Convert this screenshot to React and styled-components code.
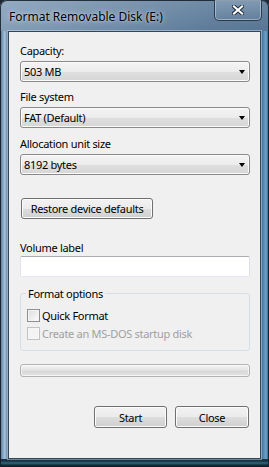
import React from "react"
import styled, { createGlobalStyle } from "styled-components"

const GlobalStyle = createGlobalStyle`
  html, body {
    margin: 0;
    padding: 0;
    background: #1b2633;
  }
  body {
    font-family: "Noto Sans", "Open Sans", sans-serif;
    font-size: 11px;
    letter-spacing: -0.3px;
    color: #000;
  }
`

const App = () => {
  return (
    <>
      <GlobalStyle />
      <Window>
        <TitleBar>
          <Title>Format Removable Disk (E:)</Title>
          <CloseButton>
            <svg width="12" height="10" viewBox="0 0 12 10">
              <path d="M2 1.5 L10 8.5 M10 1.5 L2 8.5" stroke="#1d2a38" strokeWidth="4" strokeLinecap="square" />
              <path d="M2 1.5 L10 8.5 M10 1.5 L2 8.5" stroke="#fff" strokeWidth="2.2" strokeLinecap="square" />
            </svg>
          </CloseButton>
        </TitleBar>
        <Client>
          <Label top={11}>Capacity:</Label>
          <Combo>
            <span>503 MB</span>
            <Arrow />
          </Combo>
          <Label top={7}>File system</Label>
          <Combo>
            <span>FAT (Default)</span>
            <Arrow />
          </Combo>
          <Label top={8}>Allocation unit size</Label>
          <Combo>
            <span>8192 bytes</span>
            <Arrow />
          </Combo>
          <RestoreButton>Restore device defaults</RestoreButton>
          <Label top={21} bottom={1}>Volume label</Label>
          <TextBox />
          <Group>
            <Legend>Format options</Legend>
            <CheckRow>
              <Box />
              <span>Quick Format</span>
            </CheckRow>
            <CheckRow disabled>
              <Box disabled />
              <span>Create an MS-DOS startup disk</span>
            </CheckRow>
          </Group>
          <Progress />
          <ButtonRow>
            <Button width={73}>Start</Button>
            <Button width={74}>Close</Button>
          </ButtonRow>
        </Client>
      </Window>
    </>
  )
}

export default App

const Window = styled.div`
  width: 269px;
  height: 467px;
  box-sizing: border-box;
  padding: 0 8px 8px;
  display: flex;
  flex-direction: column;
  border-radius: 7px 7px 3px 3px;
  background:
    linear-gradient(90deg, #253443 0, #5f7f9f 1px, #86a7c5 3px, #a8c3da 5px, #6a8cab 7px, #4d6a86 8px) left 0 top 31px / 8px calc(100% - 39px) no-repeat,
    linear-gradient(270deg, #1c3144 0, #3e6c92 1px, #6ea3ca 3px, #4f81a9 6px, #3b678d 8px) right 0 top 31px / 8px calc(100% - 39px) no-repeat,
    linear-gradient(0deg, #0e1a22 0, #16303e 2px, #2a6880 4px, #18303f 6px, #1e3646 8px) left bottom / 100% 8px no-repeat,
    linear-gradient(180deg, rgba(255, 255, 255, 0.12), rgba(255, 255, 255, 0) 31px),
    linear-gradient(100deg, #86a0b9 0%, #6d8aa7 35%, #5c7a99 62%, #4f6e8e 100%);
  box-shadow: inset 0 0 0 1px rgba(18, 28, 38, 0.85);
`

const TitleBar = styled.div`
  height: 31px;
  flex: none;
  display: flex;
  justify-content: space-between;
  align-items: flex-start;
`

const Title = styled.div`
  margin: 9px 0 0 1px;
  font-size: 12px;
  letter-spacing: 0;
  line-height: 15px;
  color: #000;
  text-shadow: 0 0 6px rgba(255, 255, 255, 0.7), 0 0 2px rgba(255, 255, 255, 0.5);
`

const CloseButton = styled.div`
  width: 48px;
  height: 21px;
  box-sizing: border-box;
  margin-right: -1px;
  display: flex;
  align-items: center;
  justify-content: center;
  border: 1px solid #2c3b4a;
  border-top: none;
  border-radius: 0 0 5px 5px;
  background: linear-gradient(180deg, rgba(170, 190, 210, 0.35), rgba(110, 135, 160, 0.25));
  box-shadow: inset 0 0 0 1px rgba(220, 235, 250, 0.45);
`

const Client = styled.div`
  flex: 1;
  display: flex;
  flex-direction: column;
  background: #f0f0f0;
  border: 1px solid #33475a;
  box-shadow: 0 0 0 1px rgba(220, 235, 245, 0.45);
  padding: 0 10px 0 11px;
`

const Label = styled.div`
  height: 15px;
  line-height: 15px;
  margin-top: ${(p) => p.top}px;
  margin-bottom: ${(p) => (p.bottom !== undefined ? p.bottom : 3)}px;
`

const Combo = styled.div`
  height: 21px;
  box-sizing: border-box;
  display: flex;
  align-items: center;
  justify-content: space-between;
  padding: 0 4px 0 3px;
  border: 1px solid #8a8a8a;
  border-radius: 3px;
  background: linear-gradient(180deg, #f4f4f4 0%, #ececec 50%, #dfdfdf 51%, #d6d6d6 100%);
  box-shadow: inset 0 0 0 1px #fbfbfb;
`

const Arrow = styled.div`
  width: 0;
  height: 0;
  border-left: 3.5px solid transparent;
  border-right: 3.5px solid transparent;
  border-top: 4px solid #000;
`

const Button = styled.div`
  width: ${(p) => p.width}px;
  height: 22px;
  box-sizing: border-box;
  display: flex;
  align-items: center;
  justify-content: center;
  border: 1px solid #707070;
  border-radius: 3px;
  background: linear-gradient(180deg, #f2f2f2 0%, #ebebeb 50%, #dddddd 51%, #cfcfcf 100%);
  box-shadow: inset 0 0 0 1px #fcfcfc;
`

const RestoreButton = styled(Button)`
  width: 132px;
  height: 21px;
  margin: 23px 0 0 1px;
`

const TextBox = styled.div`
  height: 21px;
  box-sizing: border-box;
  background: #fff;
  border: 1px solid;
  border-color: #abadb3 #dbdfe6 #e3e9ef #e2e3ea;
  border-radius: 2px;
`

const Group = styled.fieldset`
  margin: 9px 0 0;
  padding: 7px 6px 9px;
  min-width: 0;
  border: 1px solid #d5dfe5;
  border-radius: 3px;
  display: flex;
  flex-direction: column;
  gap: 3px;
`

const Legend = styled.legend`
  padding: 0 2px;
  margin-left: -1px;
  line-height: 15px;
`

const CheckRow = styled.div`
  height: 15px;
  display: flex;
  align-items: center;
  gap: 2px;
  color: ${(p) => (p.disabled ? "#a0a0a0" : "#000")};
`

const Box = styled.div`
  width: 13px;
  height: 13px;
  box-sizing: border-box;
  flex: none;
  border: 1px solid ${(p) => (p.disabled ? "#c3c3c3" : "#8e8f8f")};
  background: ${(p) =>
    p.disabled
      ? "#f4f4f4"
      : "linear-gradient(135deg, #dcdcdc 0%, #f0f0f0 60%, #fbfbfb 100%)"};
  box-shadow: inset 0 0 0 1px ${(p) => (p.disabled ? "#f7f7f7" : "#f4f4f4")};
`

const Progress = styled.div`
  height: 13px;
  margin-top: 13px;
  box-sizing: border-box;
  border: 1px solid #b2b2b2;
  border-radius: 3px;
  background: linear-gradient(180deg, #f3f3f3 0%, #e6e6e6 40%, #d8d8d8 60%, #e4e4e4 100%);
  box-shadow: inset 0 0 0 1px rgba(255, 255, 255, 0.6);
`

const ButtonRow = styled.div`
  display: flex;
  justify-content: flex-end;
  gap: 8px;
  margin: 29px 1px 0 0;
`
